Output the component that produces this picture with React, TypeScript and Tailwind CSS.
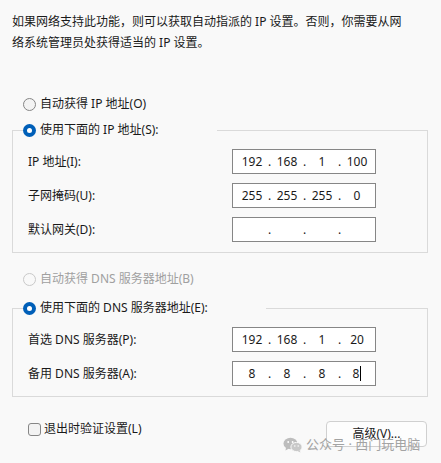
import React from "react";

type Ip = [string, string, string, string];

function Radio({ state }: { state: "on" | "off" | "disabled" }) {
  if (state === "on") {
    return (
      <span className="flex h-[13px] w-[13px] shrink-0 items-center justify-center rounded-full bg-[#005fb8]">
        <span className="h-[5px] w-[5px] rounded-full bg-white" />
      </span>
    );
  }
  return (
    <span
      className={`h-[13px] w-[13px] shrink-0 rounded-full border ${
        state === "off" ? "border-[#858585] bg-[#f3f3f3]" : "border-[#c9c9c9] bg-[#f9f9f9]"
      }`}
    />
  );
}

function IpBox({ value, caret }: { value: Ip; caret?: boolean }) {
  return (
    <div className="flex h-[25px] w-[144px] items-center border border-[#868686] bg-white pl-[5px] text-[#1a1a1a]">
      {value.map((v, i) => (
        <React.Fragment key={i}>
          {i > 0 && <span className="w-[7px] text-center">.</span>}
          <span className="flex w-[28px] items-center justify-center">
            {v}
            {caret && i === 3 && <span className="ml-[1px] h-[15px] w-px bg-black" />}
          </span>
        </React.Fragment>
      ))}
    </div>
  );
}

function Row({ label, value, caret }: { label: string; value: Ip; caret?: boolean }) {
  return (
    <div className="flex items-center">
      <span className="w-[219px] pl-[15px]">{label}</span>
      <IpBox value={value} caret={caret} />
    </div>
  );
}

function Group({ legend, gap, children }: { legend: string; gap: string; children: React.ReactNode }) {
  return (
    <fieldset className="border border-[#dadada]">
      <legend className={`ml-[10px] flex h-[20px] items-center gap-[4px] ${gap}`}>
        <Radio state="on" />
        <span>{legend}</span>
      </legend>
      <div className="flex flex-col gap-[9px] pt-[9px] pb-[10px]">{children}</div>
    </fieldset>
  );
}

function WeChat() {
  return (
    <svg width="20" height="16" viewBox="0 0 20 16">
      <ellipse cx="7.5" cy="6.5" rx="7" ry="5.8" fill="#bdbdbd" />
      <path d="M3 10.5 L2.5 13.5 L6 11.5 Z" fill="#bdbdbd" />
      <circle cx="5.2" cy="5" r="0.9" fill="#fff" />
      <circle cx="9.6" cy="5" r="0.9" fill="#fff" />
      <ellipse cx="13.5" cy="10" rx="5.6" ry="4.6" fill="#c8c8c8" stroke="#f9f9f9" strokeWidth="1" />
      <path d="M16.5 13 L17.5 15.5 L14.5 14 Z" fill="#c8c8c8" />
      <circle cx="11.8" cy="9" r="0.75" fill="#fff" />
      <circle cx="15.2" cy="9" r="0.75" fill="#fff" />
    </svg>
  );
}

export default function App() {
  return (
    <div className="relative h-[463px] w-full overflow-hidden bg-[#f9f9f9] pl-[12px] pr-[13px] font-['Noto_Sans','Noto_Sans_CJK_SC',sans-serif] text-[12px] text-[#1a1a1a]">
      <p className="whitespace-nowrap pt-[11px] leading-[21px]">
        如果网络支持此功能，则可以获取自动指派的 IP 设置。否则，你需要从网
        <br />
        络系统管理员处获得适当的 IP 设置。
      </p>

      <div className="mt-[41px] flex h-[20px] items-center gap-[4px] pl-[11px]">
        <Radio state="off" />
        <span>自动获得 IP 地址(O)</span>
      </div>

      <div className="mt-[6px]">
        <Group legend="使用下面的 IP 地址(S):" gap="pr-[58px]">
          <Row label="IP 地址(I):" value={["192", "168", "1", "100"]} />
          <Row label="子网掩码(U):" value={["255", "255", "255", "0"]} />
          <Row label="默认网关(D):" value={["", "", "", ""]} />
        </Group>
      </div>

      <div className="mt-[16px] flex h-[20px] items-center gap-[4px] pl-[11px] text-[#a0a0a0]">
        <Radio state="disabled" />
        <span>自动获得 DNS 服务器地址(B)</span>
      </div>

      <div className="mt-[9px]">
        <Group legend="使用下面的 DNS 服务器地址(E):" gap="pr-[58px]">
          <Row label="首选 DNS 服务器(P):" value={["192", "168", "1", "20"]} />
          <Row label="备用 DNS 服务器(A):" value={["8", "8", "8", "8"]} caret />
        </Group>
      </div>

      <div className="mt-[22px] flex items-start justify-between">
        <label className="flex h-[20px] items-center gap-[3px] pl-[16px]">
          <span className="h-[13px] w-[13px] rounded-[3px] border border-[#868686] bg-[#f3f3f3]" />
          <span>退出时验证设置(L)</span>
        </label>
        <button className="mt-[2px] mr-[1px] h-[26px] w-[101px] rounded-[4px] border border-[#d0d0d0] bg-[#fdfdfd] text-[12px]">
          高级(V)...
        </button>
      </div>

      <div className="absolute left-[283px] top-[435px] flex items-center gap-[3px] text-[13px] text-[#a3a3a3]">
        <WeChat />
        <span>公众号 · 西门玩电脑</span>
      </div>
    </div>
  );
}
